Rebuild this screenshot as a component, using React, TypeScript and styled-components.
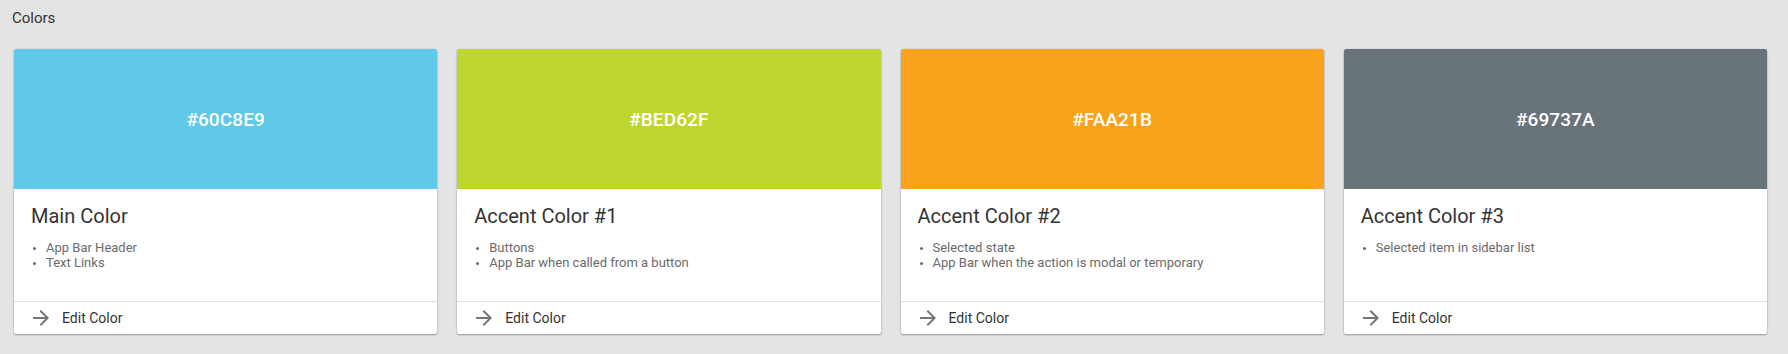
import styled, { createGlobalStyle } from 'styled-components';

type Swatch = {
	hex: string;
	title: string;
	uses: string[];
};

const swatches: Swatch[] = [
	{ hex: '#60C8E9', title: 'Main Color', uses: ['App Bar Header', 'Text Links'] },
	{ hex: '#BED62F', title: 'Accent Color #1', uses: ['Buttons', 'App Bar when called from a button'] },
	{ hex: '#FAA21B', title: 'Accent Color #2', uses: ['Selected state', 'App Bar when the action is modal or temporary'] },
	{ hex: '#69737A', title: 'Accent Color #3', uses: ['Selected item in sidebar list'] },
];

const GlobalStyle = createGlobalStyle`
	html, body {
		margin: 0;
		padding: 0;
		background: #e4e4e4;
		font-family: Roboto, 'Noto Sans', sans-serif;
	}
`;

const Page = styled.div`
	padding: 8px 21px 20px 14px;
	height: 354px;
	box-sizing: border-box;
`;

const Heading = styled.h2`
	margin: 0 0 21px -2px;
	font-size: 15px;
	font-weight: 400;
	line-height: 20px;
	color: #333;
`;

const Grid = styled.div`
	display: grid;
	grid-template-columns: repeat(4, 1fr);
	gap: 20px;
`;

const Card = styled.div`
	background: #fff;
	border-radius: 2px;
	overflow: hidden;
	box-shadow: 0 1px 2px rgba(0, 0, 0, 0.35), 0 0 2px rgba(0, 0, 0, 0.08);
	display: flex;
	flex-direction: column;
	height: 285px;
`;

const Chip = styled.div<{ $color: string }>`
	height: 140px;
	background: ${p => p.$color};
	display: flex;
	align-items: center;
	justify-content: center;
	color: #fff;
	font-size: 19px;
	font-weight: 500;
	letter-spacing: 0.1px;
`;

const Body = styled.div`
	flex: 1;
	padding: 15px 17px 0;
`;

const Title = styled.div`
	font-size: 20px;
	line-height: 24px;
	color: #333;
`;

const Uses = styled.ul`
	margin: 12px 0 0;
	padding: 0 0 0 15px;
	font-size: 13px;
	line-height: 15px;
	color: #6b6b6b;

	& li::marker {
		font-size: 10px;
	}
`;

const Footer = styled.div`
	border-top: 1px solid #e0e0e0;
	height: 32px;
	display: flex;
	align-items: center;
	padding-left: 15px;
	gap: 9px;
	font-size: 14px;
	color: #333;
`;

const Arrow = () => (
	<svg width='24' height='24' viewBox='0 0 24 24' fill='#757575'>
		<path d='M12 4l-1.41 1.41L16.17 11H4v2h12.17l-5.58 5.59L12 20l8-8z' />
	</svg>
);

const App = () => (
	<>
		<GlobalStyle />
		<Page>
			<Heading>Colors</Heading>
			<Grid>
				{swatches.map(s => (
					<Card key={s.hex}>
						<Chip $color={s.hex}>{s.hex}</Chip>
						<Body>
							<Title>{s.title}</Title>
							<Uses>
								{s.uses.map(u => (
									<li key={u}>{u}</li>
								))}
							</Uses>
						</Body>
						<Footer>
							<Arrow />
							Edit Color
						</Footer>
					</Card>
				))}
			</Grid>
		</Page>
	</>
);

export default App;
